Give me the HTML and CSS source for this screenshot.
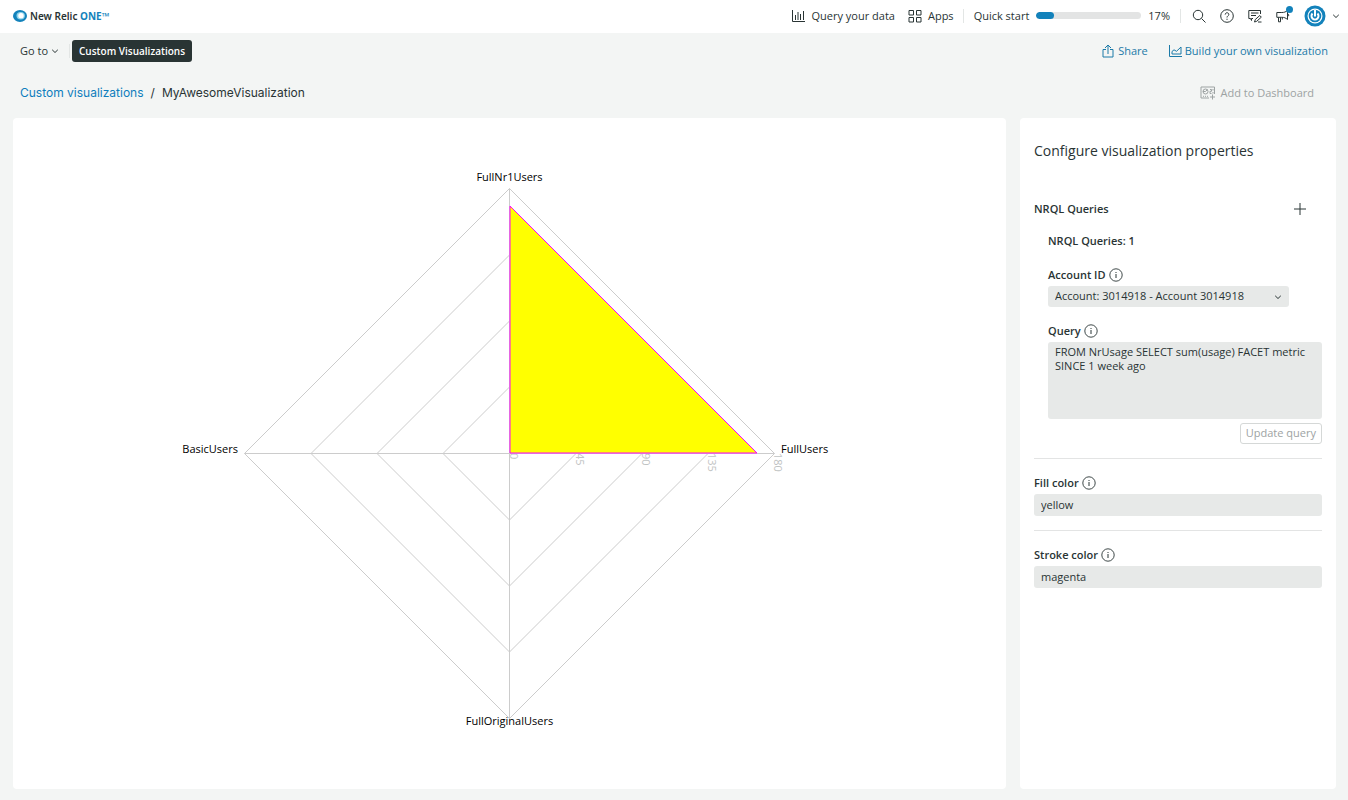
FILE: index.html
```html
<!DOCTYPE html>
<html lang="en">
<head>
<meta charset="utf-8">
<title>MyAwesomeVisualization - New Relic ONE</title>
<link rel="stylesheet" href="styles.css">
</head>
<body>
<svg class="defs" aria-hidden="true">
  <symbol id="info" viewBox="0 0 14 14"><circle cx="7" cy="7" r="6.200" fill="none" stroke="currentColor" stroke-width="0.900"/><path d="M7 6v4M7 4v1" fill="none" stroke="currentColor"/></symbol>
  <symbol id="chevron" viewBox="0 0 8 8"><path d="M1.200 2.800L4 5.500l2.800-2.700" fill="none" stroke="currentColor"/></symbol>
</svg>
<header class="topbar">
  <a class="brand" href="#">
    <svg class="brand-mark" viewBox="0 0 14 12" aria-hidden="true"><ellipse cx="7" cy="6" rx="7" ry="6" fill="#1382bb"/><ellipse cx="7.700" cy="5.800" rx="4.200" ry="3.700" fill="#8ed4ec"/><ellipse cx="8" cy="5.700" rx="2.700" ry="2.600" fill="#fff"/></svg>
    <span class="brand-name">New Relic <b>ONE™</b></span>
  </a>
  <nav class="topnav">
    <a class="toplink" href="#"><svg width="14" height="12" viewBox="0 0 14 12" class="ico"><path d="M.5 0v11.500H13M3.500 5v5M6 2v8M8.500 4v6M11.500 1v9"/></svg>Query your data</a>
    <a class="toplink" href="#"><svg width="14" height="14" viewBox="0 0 14 14" class="ico"><path d="M1 1.500h4.500V6H1zM8.500 1.500H13V6H8.500zM1 8.500h4.500V13H1zM8.500 8.500H13V13H8.500z"/></svg>Apps</a>
    <span class="divider"></span>
    <label class="quick">Quick start <progress class="meter" max="100" value="17"></progress> 17%</label>
    <span class="divider"></span>
    <div class="tools">
      <button class="tool" aria-label="Search"><svg width="14" height="14" viewBox="0 0 14 14" class="ico"><circle cx="6" cy="6" r="4.700"/><path d="M9.500 9.500l4 4"/></svg></button>
      <button class="tool" aria-label="Help"><svg width="14" height="14" viewBox="0 0 14 14" class="ico"><circle cx="7" cy="7" r="6.300"/><path d="M5.200 5.600c0-2.600 3.700-2.300 3.600-.1C8.800 6.900 7 6.900 7 8.500M7 9.700v1.200"/></svg></button>
      <button class="tool" aria-label="Feedback"><svg width="14" height="14" viewBox="0 0 14 14" class="ico"><path d="M5 9.500H3.500v2L2.500 9.500H.8v-8h11.700V5M3 4h7.500M3 6.500h5M6.500 13l.8-2.500 4.500-4 1.500 1.700-4.600 4.100zM10 13h3.500"/></svg></button>
      <button class="tool notify" aria-label="Announcements"><svg width="14" height="14" viewBox="0 0 14 14" class="ico"><path d="M.8 3.500h5c2.500 0 4-.6 5.700-2v9C9.800 9 8.300 8.300 5.800 8.300h-5zM2.500 8.500v4.300h2V8.500M6.300 8.500v2M11.500 5c1.800 0 1.800 2.200 0 2.200"/></svg><span class="dot"></span></button>
      <button class="account" aria-label="Account menu"><svg width="22" height="22" viewBox="0 0 22 22"><circle cx="11" cy="11" r="10.500" fill="#1382bb"/><circle cx="11" cy="11" r="7.500" fill="#fff"/><circle cx="11" cy="11" r="6.300" fill="#1382bb"/><path d="M8.500 8.500a3.500 3.500 0 1 0 5 0" fill="none" stroke="#fff" stroke-width="2"/><path d="M11 5v6.500" stroke="#fff" stroke-width="2"/></svg><svg width="8" height="8"><use href="#chevron"/></svg></button>
    </div>
  </nav>
</header>
<div class="subbar">
  <button class="goto">Go to <svg width="8" height="8"><use href="#chevron"/></svg></button>
  <a class="pill" href="#">Custom Visualizations</a>
  <a class="action push" href="#"><svg width="12" height="14" viewBox="0 0 12 14" class="ico"><path d="M4 5.500H1v7.500h10V5.500H8M6 10V1.200M3 4l3-3 3 3"/></svg>Share</a>
  <a class="action build" href="#"><svg width="13" height="12" viewBox="0 0 13 12" class="ico"><path d="M.5 0v11.500H13M3 9V6.500l2-1.700 2.500 1.500L12 2v7z"/></svg>Build your own visualization</a>
</div>
<div class="crumbbar">
  <nav class="crumbs"><a href="#">Custom visualizations</a><span>/</span><span>MyAwesomeVisualization</span></nav>
  <button class="add" disabled><svg width="16" height="14" viewBox="0 0 16 14" class="ico"><path d="M9 12H1V1h13.500v7M3 10.300h1M5 10.300h1M7 10.300h1M12.500 8.500v5M10 11h5M10 3.500h1.500v1.800H10v2.200h1.500M13 3v1.500M13 6v1.500"/><circle cx="5.500" cy="5.500" r="2.500"/><path d="M5.500 5.500l2-2M5.500 5.500H3"/></svg>Add to Dashboard</button>
</div>
<main class="content">
  <section class="card chart-card">
    <svg class="chart" viewBox="0 0 993 671" role="img" aria-label="Radar chart of usage by metric">
      <g class="grid">
        <path d="M231.500 335.500h530M496.500 70.500v530"/>
        <path d="M496.500 269l66.500 66.500-66.500 66.500-66.500-66.500zM496.500 203l132.500 132.500-132.500 132.500L364 335.500zM496.500 137l198.500 198.500-198.500 198.500L298 335.500zM496.500 70.500l265 265-265 265-265-265z"/>
      </g>
      <g class="ticks">
        <text transform="translate(497 335) rotate(90)">0</text>
        <text transform="translate(563 335) rotate(90)">45</text>
        <text transform="translate(629 335) rotate(90)">90</text>
        <text transform="translate(695 335) rotate(90)">135</text>
        <text transform="translate(761 335) rotate(90)">180</text>
      </g>
      <path class="area" d="M497 88v247H744z"/>
      <g class="names">
        <text x="496.500" y="63" text-anchor="middle">FullNr1Users</text>
        <text x="768" y="335">FullUsers</text>
        <text x="496.500" y="607" text-anchor="middle">FullOriginalUsers</text>
        <text x="225" y="335" text-anchor="end">BasicUsers</text>
      </g>
    </svg>
  </section>
  <aside class="card config">
    <h1>Configure visualization properties</h1>
    <div class="group-head"><h2>NRQL Queries</h2><button class="plus" aria-label="Add query"><svg width="12" height="12" viewBox="0 0 12 12" class="ico"><path d="M6 0v12M0 6h12"/></svg></button></div>
    <div class="group">
      <h3>NRQL Queries: 1</h3>
      <div class="field">
        <label for="account">Account ID <svg width="14" height="14"><use href="#info"/></svg></label>
        <div class="select"><select id="account"><option>Account: 3014918 - Account 3014918</option></select><svg width="8" height="8"><use href="#chevron"/></svg></div>
      </div>
      <div class="field query">
        <label for="query">Query <svg width="14" height="14"><use href="#info"/></svg></label>
        <textarea id="query">FROM NrUsage SELECT sum(usage) FACET metric SINCE 1 week ago</textarea>
        <button class="update" disabled>Update query</button>
      </div>
    </div>
    <div class="field ruled">
      <label for="fill">Fill color <svg width="14" height="14"><use href="#info"/></svg></label>
      <input id="fill" type="text" value="yellow">
    </div>
    <div class="field ruled">
      <label for="stroke">Stroke color <svg width="14" height="14"><use href="#info"/></svg></label>
      <input id="stroke" type="text" value="magenta">
    </div>
  </aside>
</main>
</body>
</html>
```

FILE: styles.css
```css
* { box-sizing: border-box; }
body {
  margin: 0;
  min-height: 100vh;
  display: flex;
  flex-direction: column;
  background: #f3f5f4;
  color: #293434;
  font: 11px/14px "Open Sans", sans-serif;
}
button, input, select, textarea { font: inherit; color: inherit; margin: 0; border: 0; background: none; padding: 0; }
a { color: inherit; text-decoration: none; }
svg { flex: none; display: block; }
h1, h2, h3 { margin: 0; }
.defs { position: absolute; width: 0; height: 0; }
.ico { fill: none; stroke: currentColor; stroke-width: 1; }

.topbar {
  display: flex;
  align-items: center;
  justify-content: space-between;
  height: 33px;
  padding: 0 8px 2px 13px;
  background: #fff;
}
.brand { display: flex; align-items: center; gap: 3px; font-family: "Noto Sans", sans-serif; font-size: 10px; font-weight: 600; }
.brand-mark { width: 14px; height: 12px; }
.brand b { color: #1382bb; font-weight: 700; }
.topnav, .toplink, .quick, .tools, .account { display: flex; align-items: center; }
.toplink { gap: 6px; margin-right: 13px; }
.divider { width: 1px; height: 14px; background: #e3e6e5; }
.toplink + .divider { margin-left: -4px; }
.quick { gap: 7px; margin: 0 10px; }
.meter { appearance: none; width: 105px; height: 7px; border: 0; border-radius: 4px; overflow: hidden; background: #e3e4e4; }
.meter::-webkit-progress-bar { background: #e3e4e4; }
.meter::-webkit-progress-value { background: #1382bb; border-radius: 4px; }
.tools { gap: 14px; margin-left: 11px; }
.tool { display: flex; }
.notify { position: relative; }
.dot { position: absolute; top: -3px; right: -3px; width: 7px; height: 7px; border-radius: 50%; background: #1382bb; }
.account { gap: 6px; }

.subbar { display: flex; align-items: center; height: 35px; padding: 0 20px; }
.goto { display: flex; align-items: center; gap: 3px; padding-right: 10px; border-right: 1px solid #e3e6e5; margin-right: 2px; }
.pill { padding: 4px 7px; border-radius: 3px; background: #293434; color: #fff; font-size: 10px; font-weight: 600; }
.action { display: flex; align-items: center; gap: 4px; color: #1b7aa8; }
.push { margin-left: auto; }
.build { margin-left: 21px; gap: 3px; }

.crumbbar { display: flex; align-items: center; justify-content: space-between; height: 50px; padding: 0 34px 0 20px; }
.crumbs { display: flex; gap: 7px; font: 12px/16px Inter, sans-serif; }
.crumbs a { color: #0e7dbd; }
.add { display: flex; align-items: center; gap: 5px; color: #9da3a3; }

.content { flex: 1; display: grid; grid-template-columns: minmax(0, 1fr) 316px; gap: 14px; padding: 0 12px 11px 13px; }
.card { background: #fff; border-radius: 4px; }
.chart-card { display: flex; }
.chart { flex: 1; width: 100%; min-width: 0; }
.grid { fill: none; stroke: #ccc; }
.area { fill: #ff0; stroke: #f0f; }
.ticks { fill: #bfc3c3; }
.names { fill: #000; }

.config { padding: 23px 14px; }
.config h1 { font-size: 14px; line-height: 20px; font-weight: 400; }
.config h2, .config h3, .field label { font-size: 11px; line-height: 14px; font-weight: 600; }
.group-head { display: flex; justify-content: space-between; align-items: center; padding-right: 16px; margin-top: 41px; }
.group { padding: 18px 0 14px 14px; }
.field { display: flex; flex-direction: column; }
.field label { display: flex; align-items: center; gap: 3px; margin-bottom: 4px; }
.group .field { margin-top: 20px; }
.group .query { margin-top: 17px; }
.select { position: relative; width: 88%; }
.select select { appearance: none; width: 100%; height: 21px; padding: 0 7px 1px; border-radius: 3px; background: #e7e9e8; }
.select svg { position: absolute; right: 7px; top: 7px; pointer-events: none; }
.field textarea { height: 77px; padding: 3px 7px; border-radius: 3px; background: #e7e9e8; resize: none; }
.field input { height: 22px; padding: 0 7px 1px; border-radius: 3px; background: #e7e9e8; }
.update { align-self: flex-end; height: 21px; margin-top: 4px; padding: 0 5px 1px; border: 1px solid #d5d8d7; border-radius: 3px; color: #9da3a3; }
.ruled { border-top: 1px solid #e3e4e4; padding: 17px 0 14px; }
```
